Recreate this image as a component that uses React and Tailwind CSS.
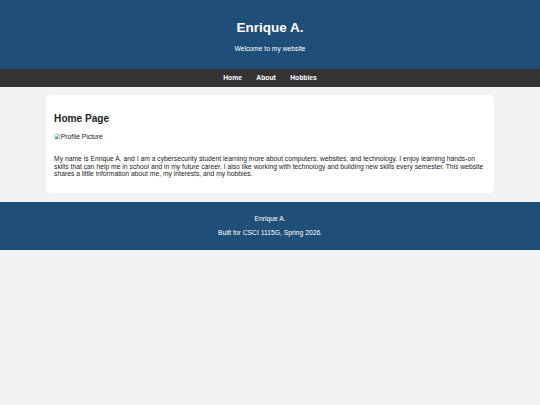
const links = ['Home', 'About', 'Hobbies'];

// Small placeholder drawn where the profile photo would be
const PictureIcon = () => (
  <svg viewBox="0 0 16 16" className="h-[6.75px] w-[6.75px] shrink-0">
    <path d="M5 1.5h6l3.5 3.5v3L7 14.5H5A3.5 3.5 0 0 1 1.5 11V5A3.5 3.5 0 0 1 5 1.5z" fill="#c6dafa" stroke="#b4b8bd" />
    <path d="M11 1.5V5h3.5z" fill="#fff" stroke="#b4b8bd" />
    <path d="M3 6.5h4.5a1.5 1.5 0 0 0-2-2A1.6 1.6 0 0 0 3 6.5z" fill="#fff" />
    <path d="M2 11.5l5-3.5 3.500 2.500L6.500 14H5a3 3 0 0 1-3-2.500z" fill="#43a047" />
    <path d="M10 14.5l4.500-4v3l-1 1z" fill="#43a047" />
  </svg>
);

const Header = () => (
  <header className="h-[69.2px] bg-[#1f4e79] pt-[20px] text-center text-white">
    <h1 className="text-[13.5px] leading-[15.6px] font-bold">Enrique A.</h1>
    <p className="mt-[9px] leading-[7.6px]">Welcome to my website</p>
  </header>
);

const Nav = () => (
  <nav className="flex h-[17.7px] items-center justify-center gap-[14.4px] bg-[#333333] font-bold text-white">
    {links.map((label) => (
      <a key={label} href="#">{label}</a>
    ))}
  </nav>
);

const Footer = () => (
  <footer className="h-[48px] bg-[#1f4e79] pt-[13px] text-center text-white">
    <p>Enrique A.</p>
    <p className="mt-[6.8px]">Built for CSCI 1115G, Spring 2026.</p>
  </footer>
);

const App = () => {
  return (
    <div className="min-h-screen bg-[#f2f2f2] font-['Liberation_Sans',Arial,sans-serif] text-[6.75px] leading-[7.6px] text-[#222222]">
      <Header />
      <Nav />

      <main className="mx-auto mt-[8.4px] h-[98px] w-[448.6px] rounded-[4.2px] bg-white px-[8.4px] pt-[17.4px]">
        <h2 className="text-[10.125px] leading-[11.8px] font-bold">Home Page</h2>
        <div className="mt-[8.2px] flex items-center">
          <PictureIcon />
          <span>Profile Picture</span>
        </div>
        <p className="mt-[15px]">
          My name is Enrique A. and I am a cybersecurity student learning more about computers, websites, and technology. I enjoy learning hands-on skills that can help me in school and in my future career. I also like working with technology and building new skills every semester. This website shares a little information about me, my interests, and my hobbies.
        </p>
      </main>

      <div className="mt-[8.4px]">
        <Footer />
      </div>
    </div>
  );
};

export default App;
